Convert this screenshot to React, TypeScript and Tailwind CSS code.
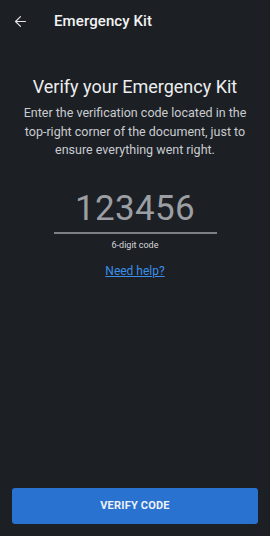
import { ArrowLeft } from "lucide-react";

export default function App() {
  return (
    <div
      className="w-[270px] h-[536px] bg-[#1c1f24] flex flex-col text-white"
      style={{ fontFamily: "Roboto, 'Noto Sans', sans-serif" }}
    >
      {/* Top bar */}
      <div className="h-[42px] pt-[1px] flex items-center pl-[12px]">
        <ArrowLeft className="size-[17px] text-[#e6e7e9]" strokeWidth={1.6} />
        <span className="ml-[25px] text-[15px] font-medium text-[#f2f3f4] tracking-[0.1px]">
          Emergency Kit
        </span>
      </div>

      {/* Content */}
      <div className="flex-1 flex flex-col items-center px-4">
        <h1 className="mt-[33px] text-[18px] leading-[24px] text-[#eceef0]">
          Verify your Emergency Kit
        </h1>
        <p className="mt-[5px] text-center text-[12.5px] leading-[18.5px] text-[#c9ccd0]">
          Enter the verification code located in the top-right corner of the document, just to ensure everything went right.
        </p>

        <div className="mt-[28px] w-[163px] flex flex-col items-center">
          <span className="text-[35px] leading-[42px] text-[#9b9ea3] tracking-[0.3px]">123456</span>
          <div className="mt-[2px] w-full h-[2px] bg-[#7d8086]" />
        </div>
        <span className="mt-[5px] text-[9px] leading-[12px] text-[#d5d7da]">6-digit code</span>
        <a href="#" className="mt-[13px] text-[12px] leading-[15px] text-[#3b8fe8] underline">
          Need help?
        </a>
      </div>

      {/* Bottom button */}
      <div className="px-3 pb-3">
        <button className="w-full h-[36px] rounded-[3px] bg-[#2a72d0] text-[11px] font-bold text-[#eef3fb] tracking-[0.2px]">
          VERIFY CODE
        </button>
      </div>
    </div>
  );
}
